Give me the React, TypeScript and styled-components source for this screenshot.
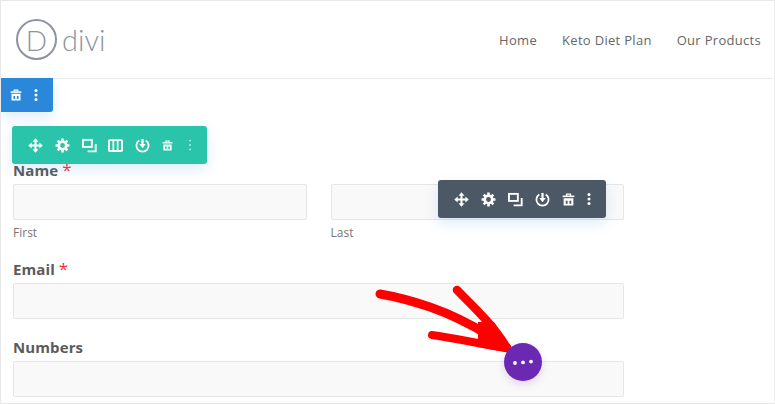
import React from "react";
import styled, { createGlobalStyle } from "styled-components";

const Global = createGlobalStyle`
  html, body { margin: 0; padding: 0; background: #fff; }
  body { font-family: "Open Sans", "Liberation Sans", sans-serif; }
`;

const Page = styled.div`
  position: relative;
  box-sizing: border-box;
  width: 775px;
  height: 404px;
  overflow: hidden;
  background: #fff;
  border-top: 1px solid #e8e8e8;
  border-left: 1px solid #e8e8e8;
  border-right: 1px solid #eeeeee;
  border-bottom: 1px solid #e8e8e8;
`;

const Header = styled.header`
  box-sizing: border-box;
  height: 78px;
  display: flex;
  align-items: center;
  justify-content: space-between;
  padding: 0 13px 0 15px;
  border-bottom: 1px solid #ebebeb;
`;

const Logo = styled.div`
  display: flex;
  align-items: center;
  gap: 5px;
`;

const LogoMark = styled.div`
  box-sizing: border-box;
  width: 41px;
  height: 41px;
  border: 2px solid #8d93a3;
  border-radius: 50%;
  display: flex;
  align-items: center;
  justify-content: center;
  color: #8d93a3;
  font-family: "Lato", sans-serif;
  font-weight: 300;
  font-size: 28px;
  line-height: 1;
`;

const LogoWord = styled.span`
  color: #8d93a3;
  font-family: "Lato", sans-serif;
  font-weight: 300;
  font-size: 29px;
  line-height: 1;
`;

const Nav = styled.nav`
  display: flex;
  gap: 25px;
`;

const NavLink = styled.a`
  color: #666;
  font-size: 13px;
  font-weight: 500;
  letter-spacing: 0.3px;
  line-height: 20px;
`;

const Form = styled.div`
  width: 611px;
  margin-left: 12px;
  padding-top: 80px;
  display: flex;
  flex-direction: column;
`;

const Field = styled.div`
  display: flex;
  flex-direction: column;
  margin-bottom: 17px;
`;

const Label = styled.label`
  color: #5b5b5b;
  font-size: 15px;
  font-weight: 700;
  letter-spacing: 0.1px;
  line-height: 22px;
  margin-bottom: 3px;
`;

const Required = styled.span`
  color: #f5303f;
  font-size: 17px;
  font-weight: 400;
  line-height: 0;
`;

const Pair = styled.div`
  display: grid;
  grid-template-columns: 1fr 1fr;
  gap: 24px;
`;

const Part = styled.div`
  display: flex;
  flex-direction: column;
`;

const Input = styled.div`
  box-sizing: border-box;
  height: 36px;
  background: #f9f9f9;
  border: 1px solid #e6e6e6;
  border-radius: 2px;
`;

const Sub = styled.span`
  color: #7b7474;
  font-size: 12px;
  line-height: 17px;
  margin-top: 4px;
`;

const Toolbar = styled.div<{ $bg: string; $x: number; $y: number; $w: number; $h: number; $gap: number; $pad: number; $radius: string }>`
  position: absolute;
  left: ${(p) => p.$x}px;
  top: ${(p) => p.$y}px;
  width: ${(p) => p.$w}px;
  height: ${(p) => p.$h}px;
  box-sizing: border-box;
  padding-left: ${(p) => p.$pad}px;
  display: flex;
  align-items: center;
  gap: ${(p) => p.$gap}px;
  color: #fff;
  background: ${(p) => p.$bg};
  border-radius: ${(p) => p.$radius};
  box-shadow: 0 5px 14px rgba(43, 135, 218, 0.16);
`;

const FaintSlot = styled.span`
  display: flex;
  margin-left: 3px;
`;

const Fab = styled.div`
  position: absolute;
  left: 503px;
  top: 342px;
  width: 38px;
  height: 38px;
  border-radius: 50%;
  background: #6a28b3;
  box-shadow: 0 3px 8px rgba(106, 40, 179, 0.18);
  display: flex;
  align-items: center;
  justify-content: center;
  color: #fff;
`;

const Overlay = styled.svg`
  position: absolute;
  left: -1px;
  top: -1px;
  pointer-events: none;
`;

const Icon = ({ size = 16, children }: { size?: number; children: React.ReactNode }) => (
  <svg width={size} height={size} viewBox="0 0 16 16" fill="none" stroke="currentColor" strokeWidth="1.7">
    {children}
  </svg>
);

const MoveIcon = () => (
  <Icon size={15}>
    <path d="M8 2v12M2 8h12" strokeWidth="2.2" />
    <path d="M8 .3 11.2 3.9H4.8ZM8 15.7 11.2 12.1H4.8ZM.3 8 3.9 4.8V11.2ZM15.7 8 12.1 4.8V11.2Z" fill="currentColor" stroke="none" />
  </Icon>
);

const GearIcon = () => (
  <Icon size={15}>
    <circle cx="8" cy="8" r="4" strokeWidth="2.8" />
    <path d="M8 .6v3M8 12.4v3M.6 8h3M12.4 8h3M2.8 2.8l2.1 2.1M11.1 11.1l2.1 2.1M13.2 2.8 11.1 4.9M4.9 11.1l-2.1 2.1" strokeWidth="2.8" />
  </Icon>
);

const CopyIcon = () => (
  <Icon size={15}>
    <rect x="1" y="2" width="9.5" height="7.5" strokeWidth="2" />
    <path d="M14.6 6.5v7.7H6" strokeWidth="2" />
  </Icon>
);

const ColumnsIcon = () => (
  <Icon size={15}>
    <rect x="1" y="2.2" width="14" height="11.6" rx="1" strokeWidth="2" />
    <path d="M5.7 2.5v11M10.3 2.5v11" strokeWidth="1.8" />
  </Icon>
);

const PowerIcon = () => (
  <Icon size={15}>
    <path d="M4.6 2.6a6.5 6.5 0 1 0 6.8 0" strokeWidth="1.9" />
    <path d="M8 1v7" strokeWidth="2.4" />
    <path d="M4.6 6.4h6.8L8 10.8Z" fill="currentColor" stroke="none" />
  </Icon>
);

const TrashIcon = ({ size = 14 }: { size?: number }) => (
  <Icon size={size}>
    <path d="M.8 4.1h14.4" strokeWidth="2" />
    <path d="M5.6 3.6V1.4h4.8v2.2" strokeWidth="1.6" />
    <path
      fillRule="evenodd"
      d="M2 6.4h12V15.4H2ZM4.6 9.4V13.2H6.9V9.4ZM9.1 9.4V13.2H11.4V9.4Z"
      fill="currentColor"
      stroke="none"
    />
  </Icon>
);

const MoreIcon = ({ faint }: { faint?: boolean }) => (
  <svg width="4" height="14" viewBox="0 0 4 14" fill="currentColor" opacity={faint ? 0.7 : 1}>
    <circle cx="2" cy="2.6" r={faint ? 0.9 : 1.5} />
    <circle cx="2" cy="7" r={faint ? 0.9 : 1.5} />
    <circle cx="2" cy="11.4" r={faint ? 0.9 : 1.5} />
  </svg>
);

const Dots = () => (
  <svg width="22" height="8" viewBox="0 0 22 8" fill="currentColor">
    <circle cx="3" cy="5" r="1.9" />
    <circle cx="11" cy="4.4" r="1.9" />
    <circle cx="19" cy="3.6" r="1.9" />
  </svg>
);

export default function App() {
  return (
    <Page>
      <Global />
      <Header>
        <Logo>
          <LogoMark>D</LogoMark>
          <LogoWord>divi</LogoWord>
        </Logo>
        <Nav>
          <NavLink>Home</NavLink>
          <NavLink>Keto Diet Plan</NavLink>
          <NavLink>Our Products</NavLink>
        </Nav>
      </Header>
      <Form>
        <Field>
          <Label>
            Name <Required>*</Required>
          </Label>
          <Pair>
            <Part>
              <Input />
              <Sub>First</Sub>
            </Part>
            <Part>
              <Input />
              <Sub>Last</Sub>
            </Part>
          </Pair>
        </Field>
        <Field>
          <Label>
            Email <Required>*</Required>
          </Label>
          <Input />
        </Field>
        <Field>
          <Label>Numbers</Label>
          <Input />
        </Field>
      </Form>

      <Toolbar $bg="#2b87da" $x={0} $y={77} $w={52} $h={34} $gap={12} $pad={9} $radius="0 0 3px 0">
        <TrashIcon size={12} />
        <MoreIcon />
      </Toolbar>
      <Toolbar $bg="#29c4a9" $x={11} $y={125} $w={195} $h={38} $gap={11.8} $pad={16} $radius="3px">
        <MoveIcon />
        <GearIcon />
        <CopyIcon />
        <ColumnsIcon />
        <PowerIcon />
        <TrashIcon size={11} />
        <FaintSlot>
          <MoreIcon faint />
        </FaintSlot>
      </Toolbar>
      <Toolbar $bg="#4c5866" $x={437} $y={179} $w={168} $h={38} $gap={12} $pad={16} $radius="3px">
        <MoveIcon />
        <GearIcon />
        <CopyIcon />
        <PowerIcon />
        <TrashIcon size={13} />
        <MoreIcon />
      </Toolbar>

      <Overlay width="775" height="404" viewBox="0 0 775 404" fill="none" stroke="#ff0000" strokeLinecap="round" strokeLinejoin="round">
        <path d="M380 294C398 297 415 302 430 307C450 314 472 325 490 336L507 348" strokeWidth="9" />
        <path d="M457 290C475 308 494 326 507 348" strokeWidth="8.5" />
        <path d="M432 335C455 338 480 344 507 348" strokeWidth="8" />
        <path d="M478 322 494 322 510 348 505 352 478 347Z" fill="#ff0000" stroke="none" />
      </Overlay>
      <Fab>
        <Dots />
      </Fab>
    </Page>
  );
}
